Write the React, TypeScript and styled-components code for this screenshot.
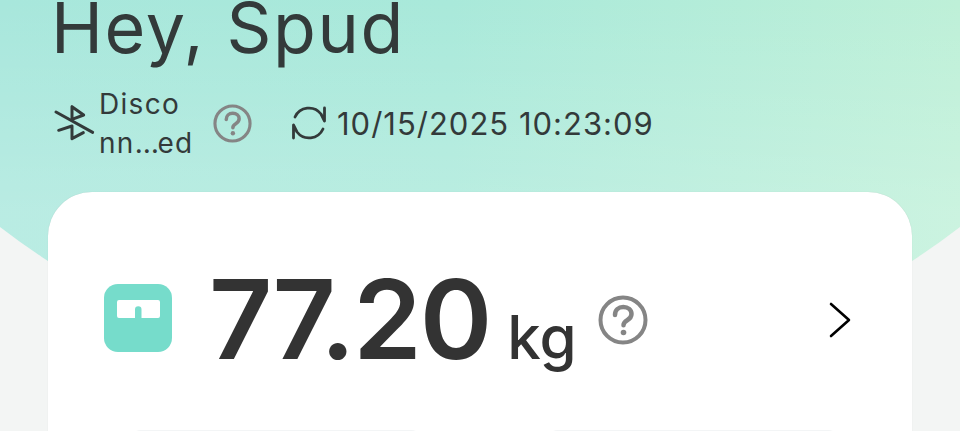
import { createGlobalStyle, styled } from 'styled-components'

const GlobalStyle = createGlobalStyle`
  html, body {
    margin: 0;
    padding: 0;
    background: #f3f5f4;
  }
  #root {
    width: 960px;
    height: 431px;
    overflow: hidden;
  }
`

function HelpIcon({ size }: { size: number }) {
  return (
    <svg width={size} height={size} viewBox="0 0 50 50" fill="none" stroke="#858585" strokeWidth="4" strokeLinecap="round">
      <circle cx="25" cy="25" r="22.5" />
      <path d="M17 20c0-5 3.500-8 8.300-8s8.200 3 8.200 7c0 3.200-1.800 4.800-4.300 6.300-2.200 1.300-3.700 2.500-3.700 5" strokeWidth="4.500" />
      <circle cx="25.500" cy="37.500" r="2.800" fill="#858585" stroke="none" />
    </svg>
  )
}

function BluetoothOffIcon() {
  return (
    <svg width="50" height="50" viewBox="0 0 150 150" fill="none" stroke="#333a3a" strokeWidth="9" strokeLinejoin="round" strokeLinecap="round">
      <path d="M18 42 128 103" />
      <path d="M66 26v38l35-13z" />
      <path d="M26 97l40-13v38l34-18" />
    </svg>
  )
}

function SyncIcon() {
  return (
    <svg width="36" height="36" viewBox="0 0 36 36" fill="none" stroke="#333a3a" strokeWidth="2.800" strokeLinecap="round" strokeLinejoin="round">
      <path d="M4 12A15.300 15.300 0 0 1 30 9l3.500 7V3" />
      <path d="M32 24A15.300 15.300 0 0 1 6 27l-3.500-7v13" />
    </svg>
  )
}

function ScaleIcon() {
  return (
    <svg width="68" height="68" viewBox="0 0 68 68">
      <rect width="68" height="68" rx="14" fill="#76dccb" />
      <path d="M15 16h39a2 2 0 0 1 2 2v14a2 2 0 0 1-2 2H37.500V25.500a3.250 3.250 0 0 0-6.500 0V34H15a2 2 0 0 1-2-2V18a2 2 0 0 1 2-2z" fill="#fff" />
    </svg>
  )
}

export default function App() {
  return (
    <Page>
      <GlobalStyle />
      <Backdrop />
      <Content>
        <Greeting>Hey, Spud</Greeting>
        <StatusRow>
          <BluetoothOffIcon />
          <ConnectionLabel>
            Disco
            <br />
            nn<Ellipsis>…</Ellipsis>ed
          </ConnectionLabel>
          <StatusHelp>
            <HelpIcon size={39} />
          </StatusHelp>
          <SyncGroup>
            <SyncIcon />
            <SyncTime>10/15/2025 10:23:09</SyncTime>
          </SyncGroup>
        </StatusRow>
        <Card>
          <WeightRow>
            <ScaleIcon />
            <WeightFigure>
              <WeightValue>77.20</WeightValue>
              <WeightUnit>kg</WeightUnit>
            </WeightFigure>
            <WeightHelp>
              <HelpIcon size={50} />
            </WeightHelp>
            <Chevron width="22" height="36" viewBox="0 0 22 36" fill="none" stroke="#000" strokeWidth="2.600" strokeLinecap="round" strokeLinejoin="round">
              <path d="M2 2l18 16L2 34" />
            </Chevron>
          </WeightRow>
          <TileRow>
            <Tile />
            <Tile />
          </TileRow>
        </Card>
      </Content>
    </Page>
  )
}

const Page = styled.div`
  position: relative;
  width: 960px;
  height: 431px;
  overflow: hidden;
  background: #f3f5f4;
  font-family: Inter, 'Liberation Sans', sans-serif;
  color: #333a3a;
`

const Backdrop = styled.div`
  position: absolute;
  left: -308px;
  top: -1186px;
  width: 1576px;
  height: 1576px;
  border-radius: 50%;
  background:
    linear-gradient(180deg, rgba(255, 255, 255, 0) 1186px, rgba(255, 255, 255, 0.2) 1400px),
    linear-gradient(90deg, #a8e7dc 308px, #a9e9da 760px, #bef0d8 1268px);
`

const Content = styled.div`
  position: relative;
  display: flex;
  flex-direction: column;
  padding: 0 48px;
`

const Greeting = styled.h1`
  margin: 0 0 0 3px;
  font-size: 70px;
  line-height: 55px;
  font-weight: 400;
  letter-spacing: 1.6px;
  color: #333a3a;
`

const StatusRow = styled.div`
  display: flex;
  align-items: center;
  height: 78px;
  margin-top: 29px;
  padding-left: 2px;
`

const ConnectionLabel = styled.div`
  width: 114px;
  margin-left: -1px;
  padding-top: 2px;
  font-size: 28px;
  line-height: 39px;
  letter-spacing: 1.3px;
`

const Ellipsis = styled.span`
  letter-spacing: -1.5px;
`

const StatusHelp = styled.div`
  display: flex;
`

const SyncGroup = styled.div`
  display: flex;
  align-items: center;
  gap: 10px;
  margin-left: 39px;
`

const SyncTime = styled.div`
  font-size: 31px;
  line-height: 39px;
  letter-spacing: 1px;
`

const Card = styled.div`
  display: flex;
  flex-direction: column;
  margin-top: 30px;
  height: 300px;
  padding: 0 61px 0 56px;
  background: #fff;
  border-radius: 44px 44px 0 0;
  box-shadow: 0 0 1px rgba(0, 0, 0, 0.15);
`

const WeightRow = styled.div`
  display: flex;
  align-items: center;
  box-sizing: border-box;
  height: 238px;
  padding-top: 14px;
`

const WeightFigure = styled.div`
  display: flex;
  align-items: baseline;
  margin: 2px 0 0 37px;
`

const WeightValue = styled.div`
  font-size: 110px;
  line-height: 110px;
  font-weight: 600;
  letter-spacing: -2px;
  color: #333;
`

const WeightUnit = styled.div`
  margin-left: 17px;
  font-size: 60px;
  font-weight: 500;
  color: #333;
`

const WeightHelp = styled.div`
  display: flex;
  margin: 3px 0 0 21px;
`

const Chevron = styled.svg`
  margin: 4px 0 0 auto;
`

const TileRow = styled.div`
  display: flex;
  justify-content: space-between;
  padding: 0 11px 0 25px;
`

const Tile = styled.div`
  width: 294px;
  height: 60px;
  border-radius: 12px;
  background: #f3f5f6;
`
